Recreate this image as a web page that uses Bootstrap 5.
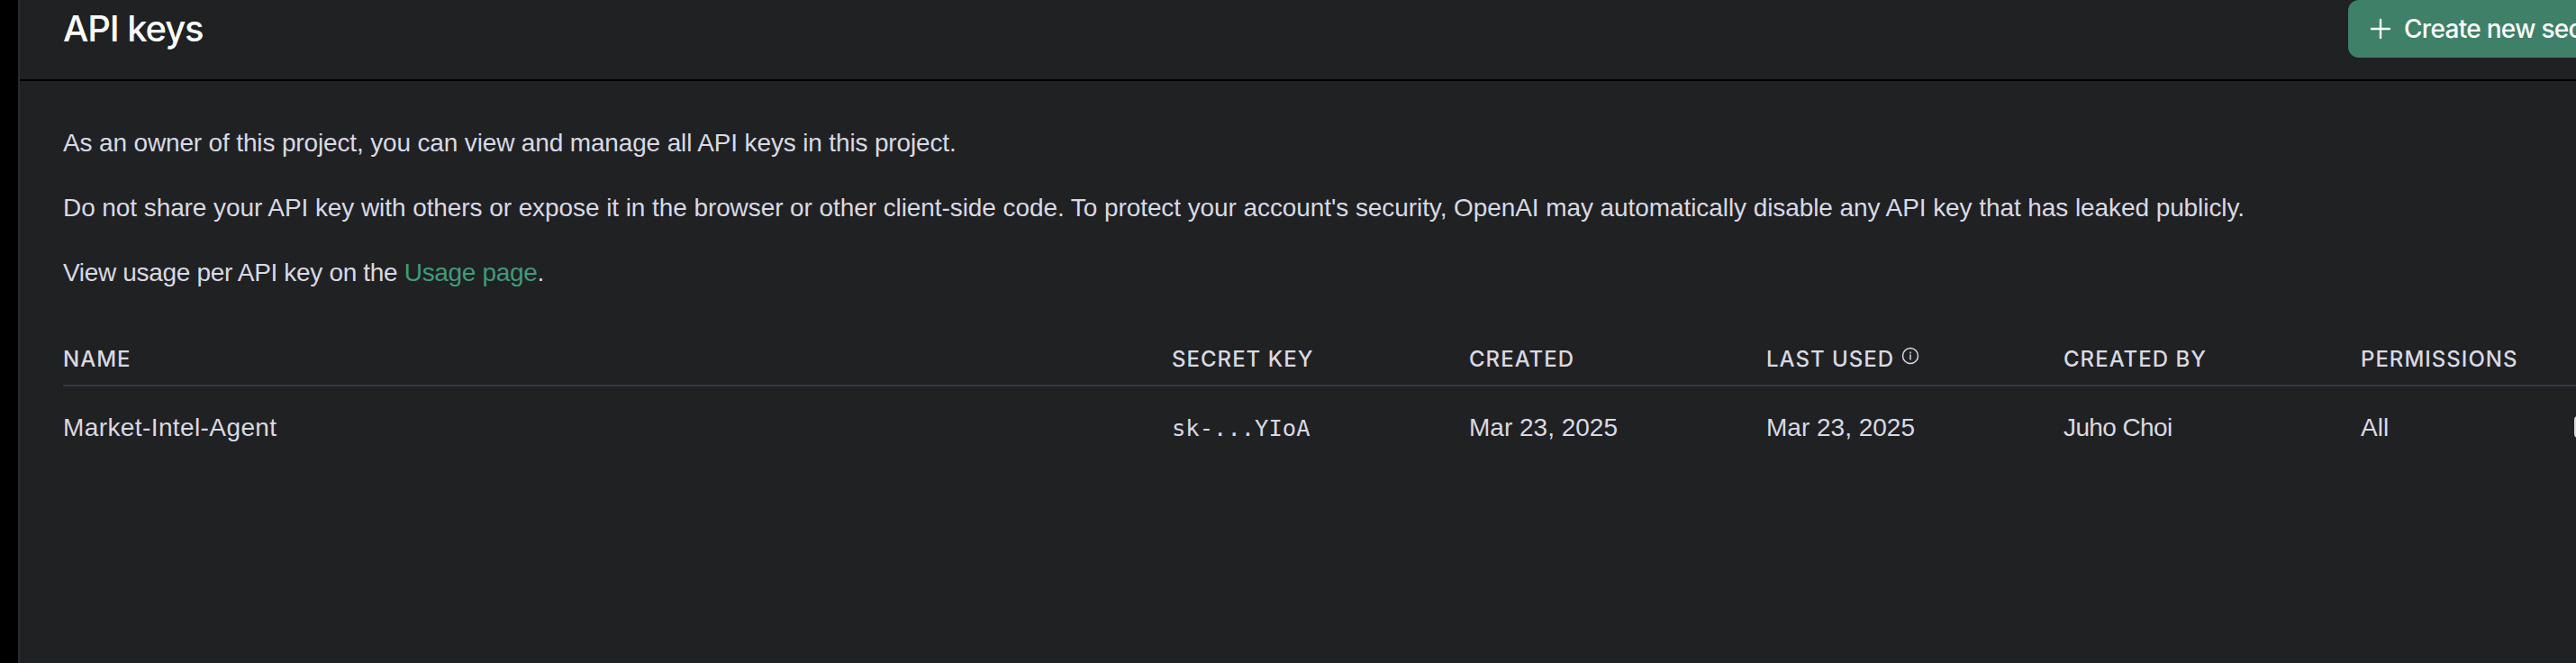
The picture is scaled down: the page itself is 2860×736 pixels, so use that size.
<!DOCTYPE html>
<html lang="en">
<head>
<meta charset="utf-8">
<title>API keys</title>
<link href="https://cdn.jsdelivr.net/npm/bootstrap@5.3.0/dist/css/bootstrap.min.css" rel="stylesheet">
<style>
html, body { height: 100%; }
body { background: #000; overflow: hidden; font-family: "Liberation Sans", Arial, sans-serif; color: #d9d9e3; }
.shell { margin-left: 20px; height: 736px; background: #202123; border-left: 2px solid #2a2b32; }
.topbar { height: 90px; border-bottom: 2px solid #000; padding-left: 48px; }
.topbar h1 { flex: none; width: 2537px; font-family: Inter, "Liberation Sans", sans-serif; font-size: 40px; font-weight: 500; letter-spacing: -1.1px; line-height: 64px; color: #fff; margin: 0; }
.create-btn { flex: none; column-gap: 14px; height: 64px; width: 400px; background: #3e8068; color: #fff; border: 0; border-radius: 12px; font-family: Inter, "Liberation Sans", sans-serif; font-size: 28px; font-weight: 500; letter-spacing: -0.7px; padding: 0 24px; white-space: nowrap; }
.bodypane { padding: 49px 0 0 48px; font-size: 28px; line-height: 40px; width: 2960px; }
.bodypane p { margin: 0 0 32px; }
.bodypane p.para-a { letter-spacing: -0.15px; }
.bodypane p.para-b { letter-spacing: -0.08px; }
.bodypane p.para-c { letter-spacing: -0.33px; }
.bodypane a { color: #3e9b7a; text-decoration: none; }
.keytable { table-layout: fixed; width: 2860px; margin: 60px 0 0; --bs-table-bg: transparent; --bs-table-color: #d9d9e3; }
.keytable th { font-family: Inter, "Liberation Sans", sans-serif; font-size: 24px; font-weight: 500; letter-spacing: 1px; line-height: 32px; padding: 0 0 12px; border-bottom: 2px solid #353740; }
.keytable td { font-size: 28px; line-height: 40px; padding: 26px 0 0; border: 0; }
.keytable td.keyname { letter-spacing: 0.4px; }
.keytable td.keyowner { letter-spacing: -0.6px; }
.keytable td.keymono { font-family: "DejaVu Sans Mono", "Liberation Mono", monospace; font-size: 25.5px; }
.infoicon { width: 20px; height: 20px; margin-left: 8px; vertical-align: 2px; }
.editmark { display: block; width: 20px; height: 24px; border: 2px solid #d9d9e3; border-radius: 4px; margin-top: 7px; }
</style>
</head>
<body>
<div class="shell">
  <div class="topbar d-flex align-items-start">
    <h1>API keys</h1>
    <button class="create-btn d-flex align-items-center" type="button">
      <svg width="24" height="24" viewBox="0 0 24 24" fill="none" stroke="currentColor" stroke-width="2.4" stroke-linecap="round"><path d="M12 2v20M2 12h20"/></svg>
      <span>Create new secret key</span>
    </button>
  </div>
  <div class="bodypane">
    <p class="para-a">As an owner of this project, you can view and manage all API keys in this project.</p>
    <p class="para-b">Do not share your API key with others or expose it in the browser or other client-side code. To protect your account's security, OpenAI may automatically disable any API key that has leaked publicly.</p>
    <p class="para-c">View usage per API key on the <a href="#">Usage page</a>.</p>
    <table class="table keytable">
      <colgroup><col style="width:1231px"><col style="width:330px"><col style="width:330px"><col style="width:330px"><col style="width:330px"><col style="width:237px"><col></colgroup>
      <thead>
        <tr>
          <th>NAME</th><th>SECRET KEY</th><th>CREATED</th>
          <th>LAST USED<svg class="infoicon" viewBox="0 0 20 20" fill="none" stroke="currentColor" stroke-width="1.5"><circle cx="10" cy="10" r="8.5"/><path d="M10 9v5M10 6v1" stroke-linecap="round"/></svg></th>
          <th>CREATED BY</th><th>PERMISSIONS</th><th></th>
        </tr>
      </thead>
      <tbody>
        <tr>
          <td class="keyname">Market-Intel-Agent</td><td class="keymono">sk-...YIoA</td><td>Mar 23, 2025</td><td>Mar 23, 2025</td><td class="keyowner">Juho Choi</td><td>All</td><td><span class="editmark"></span></td>
        </tr>
      </tbody>
    </table>
  </div>
</div>
<script src="https://cdn.jsdelivr.net/npm/bootstrap@5.3.0/dist/js/bootstrap.bundle.min.js"></script>
</body>
</html>
